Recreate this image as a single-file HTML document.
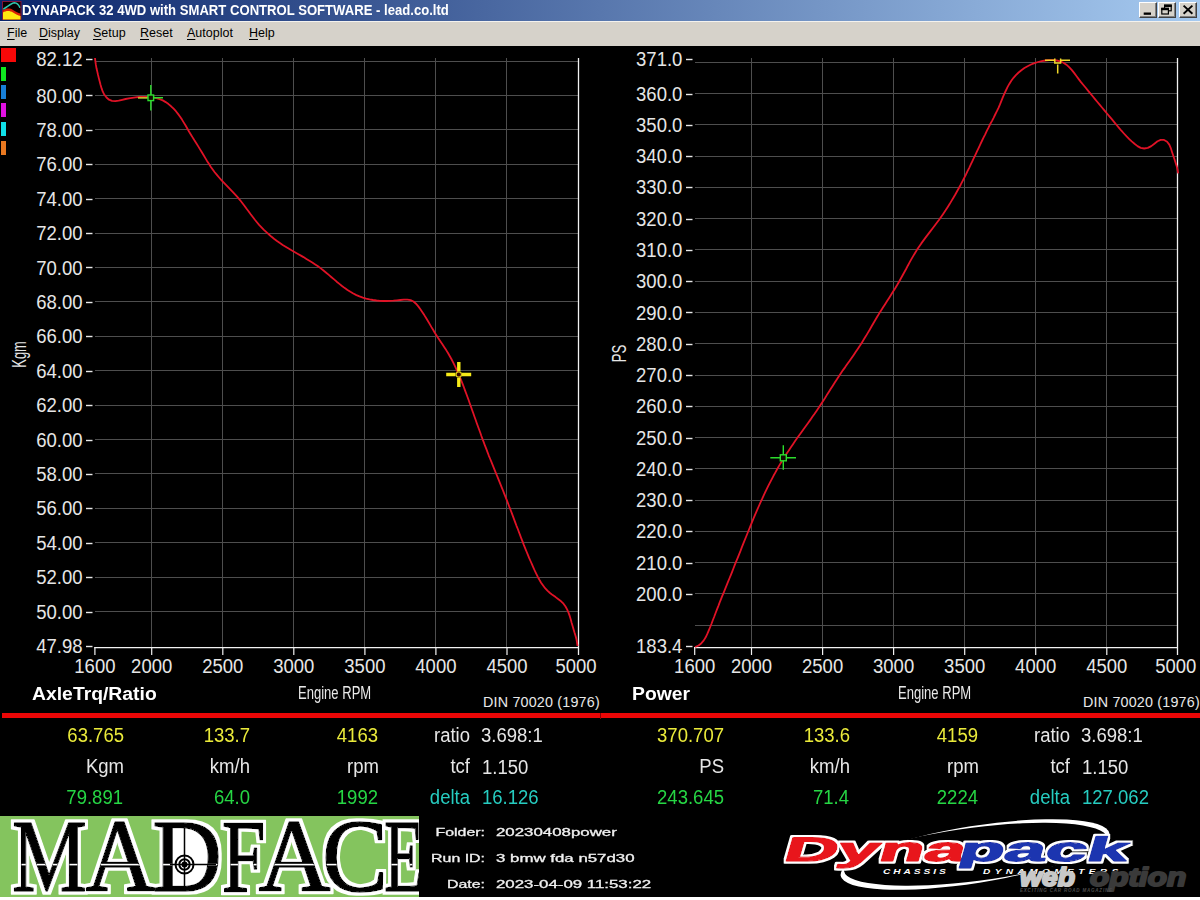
<!DOCTYPE html>
<html lang="en">
<head>
<meta charset="utf-8">
<title>DYNAPACK 32 4WD with SMART CONTROL SOFTWARE - lead.co.ltd</title>
<style>
html,body{margin:0;padding:0;}
body{width:1200px;height:900px;overflow:hidden;background:#000;position:relative;font-family:"Liberation Sans",sans-serif;color:#e8e8e8;}
.abs{position:absolute;white-space:nowrap;}
#titlebar{left:0;top:0;width:1200px;height:21px;background:linear-gradient(90deg,#0a246a 0%,#a6caf0 100%);}
#title{left:21.8px;top:2.4px;font-weight:bold;font-size:14px;line-height:16px;color:#fff;transform-origin:0 0;transform:scaleX(0.936);}
#menubar{left:0;top:21px;width:1200px;height:24.5px;background:#d6d2ca;border-top:1px solid #f4f2ee;box-sizing:border-box;}
.menu{top:26px;font-size:12.5px;line-height:14px;color:#000;}
.menu u{text-decoration:underline;text-decoration-thickness:1px;text-underline-offset:1.5px;}
.wbtn{top:2.3px;width:18px;height:16px;background:#d6d2ca;border:1px solid;border-color:#fff #404040 #404040 #fff;box-sizing:border-box;box-shadow:inset -1px -1px 0 #808080;}
svg text{font-family:"Liberation Sans",sans-serif;font-size:19.4px;fill:#e6e6e6;}
.cap{font-weight:bold;font-size:17.6px;line-height:20px;color:#fff;transform:scaleX(1.10);transform-origin:0 0;}
.erpm{font-size:17.5px;color:#e8e8e8;transform:scaleX(0.745);transform-origin:0 0;}
.din{font-size:14.3px;color:#e8e8e8;letter-spacing:0.2px;}
.d{font-size:19.4px;line-height:22px;transform:scaleX(0.955);transform-origin:0 0;}
.r{text-align:right;transform-origin:100% 0;}
.y{color:#eaea3a;}
.g{color:#26d644;}
.c{color:#26ccc0;}
.w{color:#e6e6e6;}
.info{font-size:10.6px;line-height:12px;color:#f0f0f0;transform:scaleX(1.5);-webkit-text-stroke:0.3px #f0f0f0;}
.il{transform-origin:100% 0;text-align:right;}
.iv{transform-origin:0 0;transform:scaleX(1.59);}
</style>
</head>
<body>

<!-- title bar -->
<div id="titlebar" class="abs"></div>
<svg class="abs" style="left:2px;top:1px" width="20" height="19" viewBox="0 0 20 19">
  <rect x="0" y="0" width="19.500" height="19" fill="#80143c"/>
  <rect x="1" y="1" width="17.500" height="17.500" fill="#080000"/>
  <path d="M1 18.500 L1 9.500 C4 7 8 7 11 9 C14 11 16 12 18.500 12.500 L18.500 18.500 Z" fill="#d82008"/>
  <path d="M1 18.500 L1 11.500 C4 9.500 8 9.500 11 11.500 C14 13.500 16 14.500 18.500 15 L18.500 18.500 Z" fill="#ffe810"/>
  <path d="M1.700 7.900 C6 5.500 9 2.200 12.500 1.800 C15 2 17 4.500 17.700 6.300" fill="none" stroke="#30c8b0" stroke-width="1.500" stroke-linecap="round"/>
</svg>
<div id="title" class="abs">DYNAPACK 32 4WD with SMART CONTROL SOFTWARE - lead.co.ltd</div>
<div class="abs wbtn" style="left:1139px"><svg width="16" height="14"><rect x="3.700" y="9.500" width="7.300" height="2.300" fill="#000"/></svg></div>
<div class="abs wbtn" style="left:1157.500px"><svg width="16" height="14"><rect x="5.600" y="2.200" width="6.600" height="5.600" fill="none" stroke="#000" stroke-width="1.200"/><rect x="5" y="1.600" width="7.800" height="2.400" fill="#000"/><rect x="2.800" y="5.400" width="6.600" height="5.600" fill="#d6d2ca" stroke="#000" stroke-width="1.200"/><rect x="2.200" y="4.800" width="7.800" height="2.400" fill="#000"/></svg></div>
<div class="abs wbtn" style="left:1179px"><svg width="16" height="14"><path d="M3.600 2.600 L12.400 10.800 M12.400 2.600 L3.600 10.800" stroke="#000" stroke-width="1.900"/></svg></div>

<!-- menu bar -->
<div id="menubar" class="abs"></div>
<div class="abs menu" style="left:7px"><u>F</u>ile</div>
<div class="abs menu" style="left:39px"><u>D</u>isplay</div>
<div class="abs menu" style="left:93px"><u>S</u>etup</div>
<div class="abs menu" style="left:140px"><u>R</u>eset</div>
<div class="abs menu" style="left:187px"><u>A</u>utoplot</div>
<div class="abs menu" style="left:249px"><u>H</u>elp</div>

<!-- run colour swatches -->
<div class="abs" style="left:1px;top:47.700px;width:15.300px;height:14.500px;background:#f80808"></div>
<div class="abs" style="left:1px;top:66.7px;width:5px;height:14px;background:#10e820"></div>
<div class="abs" style="left:1px;top:84.7px;width:5px;height:14px;background:#1880d8"></div>
<div class="abs" style="left:1px;top:102.7px;width:5px;height:14px;background:#e010e0"></div>
<div class="abs" style="left:1px;top:121.7px;width:5px;height:14px;background:#10e0e8"></div>
<div class="abs" style="left:1px;top:140.7px;width:5px;height:14px;background:#e87820"></div>

<!-- charts -->
<svg class="abs" style="left:0;top:0" width="1200" height="900" viewBox="0 0 1200 900">
<g shape-rendering="crispEdges">
<line x1="151.5" y1="58" x2="151.5" y2="647" stroke="#4e4e4e"/>
<line x1="222.5" y1="58" x2="222.5" y2="647" stroke="#4e4e4e"/>
<line x1="293.5" y1="58" x2="293.5" y2="647" stroke="#4e4e4e"/>
<line x1="364.5" y1="58" x2="364.5" y2="647" stroke="#4e4e4e"/>
<line x1="435.5" y1="58" x2="435.5" y2="647" stroke="#4e4e4e"/>
<line x1="506.5" y1="58" x2="506.5" y2="647" stroke="#4e4e4e"/>
<line x1="94.9" y1="611.5" x2="578.0" y2="611.5" stroke="#4e4e4e"/>
<line x1="94.9" y1="577.5" x2="578.0" y2="577.5" stroke="#4e4e4e"/>
<line x1="94.9" y1="542.5" x2="578.0" y2="542.5" stroke="#4e4e4e"/>
<line x1="94.9" y1="508.5" x2="578.0" y2="508.5" stroke="#4e4e4e"/>
<line x1="94.9" y1="473.5" x2="578.0" y2="473.5" stroke="#4e4e4e"/>
<line x1="94.9" y1="439.5" x2="578.0" y2="439.5" stroke="#4e4e4e"/>
<line x1="94.9" y1="405.5" x2="578.0" y2="405.5" stroke="#4e4e4e"/>
<line x1="94.9" y1="370.5" x2="578.0" y2="370.5" stroke="#4e4e4e"/>
<line x1="94.9" y1="336.5" x2="578.0" y2="336.5" stroke="#4e4e4e"/>
<line x1="94.9" y1="301.5" x2="578.0" y2="301.5" stroke="#4e4e4e"/>
<line x1="94.9" y1="267.5" x2="578.0" y2="267.5" stroke="#4e4e4e"/>
<line x1="94.9" y1="233.5" x2="578.0" y2="233.5" stroke="#4e4e4e"/>
<line x1="94.9" y1="198.5" x2="578.0" y2="198.5" stroke="#4e4e4e"/>
<line x1="94.9" y1="164.5" x2="578.0" y2="164.5" stroke="#4e4e4e"/>
<line x1="94.9" y1="129.5" x2="578.0" y2="129.5" stroke="#4e4e4e"/>
<line x1="94.9" y1="95.5" x2="578.0" y2="95.5" stroke="#4e4e4e"/>
<line x1="94.9" y1="61.5" x2="578.0" y2="61.5" stroke="#4e4e4e"/>
<line x1="578.5" y1="58" x2="578.5" y2="655" stroke="#f2f2f2" stroke-width="1.3" shape-rendering="auto"/>
<line x1="94.3" y1="647.5" x2="578.0" y2="647.5" stroke="#f2f2f2" stroke-width="1.25" shape-rendering="auto"/>
<line x1="94.9" y1="647" x2="94.9" y2="655" stroke="#f2f2f2" stroke-width="1.2" shape-rendering="auto"/>
<line x1="151.7" y1="647" x2="151.7" y2="655" stroke="#f2f2f2" stroke-width="1.2" shape-rendering="auto"/>
<line x1="222.8" y1="647" x2="222.8" y2="655" stroke="#f2f2f2" stroke-width="1.2" shape-rendering="auto"/>
<line x1="293.8" y1="647" x2="293.8" y2="655" stroke="#f2f2f2" stroke-width="1.2" shape-rendering="auto"/>
<line x1="364.9" y1="647" x2="364.9" y2="655" stroke="#f2f2f2" stroke-width="1.2" shape-rendering="auto"/>
<line x1="435.9" y1="647" x2="435.9" y2="655" stroke="#f2f2f2" stroke-width="1.2" shape-rendering="auto"/>
<line x1="507.0" y1="647" x2="507.0" y2="655" stroke="#f2f2f2" stroke-width="1.2" shape-rendering="auto"/>
<line x1="751.5" y1="58" x2="751.5" y2="647" stroke="#4e4e4e"/>
<line x1="822.5" y1="58" x2="822.5" y2="647" stroke="#4e4e4e"/>
<line x1="893.5" y1="58" x2="893.5" y2="647" stroke="#4e4e4e"/>
<line x1="964.5" y1="58" x2="964.5" y2="647" stroke="#4e4e4e"/>
<line x1="1035.5" y1="58" x2="1035.5" y2="647" stroke="#4e4e4e"/>
<line x1="1106.5" y1="58" x2="1106.5" y2="647" stroke="#4e4e4e"/>
<line x1="694.7" y1="625.5" x2="1177.8" y2="625.5" stroke="#4e4e4e"/>
<line x1="694.7" y1="593.5" x2="1177.8" y2="593.5" stroke="#4e4e4e"/>
<line x1="694.7" y1="562.5" x2="1177.8" y2="562.5" stroke="#4e4e4e"/>
<line x1="694.7" y1="531.5" x2="1177.8" y2="531.5" stroke="#4e4e4e"/>
<line x1="694.7" y1="500.5" x2="1177.8" y2="500.5" stroke="#4e4e4e"/>
<line x1="694.7" y1="468.5" x2="1177.8" y2="468.5" stroke="#4e4e4e"/>
<line x1="694.7" y1="437.5" x2="1177.8" y2="437.5" stroke="#4e4e4e"/>
<line x1="694.7" y1="406.5" x2="1177.8" y2="406.5" stroke="#4e4e4e"/>
<line x1="694.7" y1="375.5" x2="1177.8" y2="375.5" stroke="#4e4e4e"/>
<line x1="694.7" y1="343.5" x2="1177.8" y2="343.5" stroke="#4e4e4e"/>
<line x1="694.7" y1="312.5" x2="1177.8" y2="312.5" stroke="#4e4e4e"/>
<line x1="694.7" y1="281.5" x2="1177.8" y2="281.5" stroke="#4e4e4e"/>
<line x1="694.7" y1="249.5" x2="1177.8" y2="249.5" stroke="#4e4e4e"/>
<line x1="694.7" y1="218.5" x2="1177.8" y2="218.5" stroke="#4e4e4e"/>
<line x1="694.7" y1="187.5" x2="1177.8" y2="187.5" stroke="#4e4e4e"/>
<line x1="694.7" y1="156.5" x2="1177.8" y2="156.5" stroke="#4e4e4e"/>
<line x1="694.7" y1="124.5" x2="1177.8" y2="124.5" stroke="#4e4e4e"/>
<line x1="694.7" y1="93.5" x2="1177.8" y2="93.5" stroke="#4e4e4e"/>
<line x1="694.7" y1="62.5" x2="1177.8" y2="62.5" stroke="#4e4e4e"/>
<line x1="1177.5" y1="58" x2="1177.5" y2="655" stroke="#f2f2f2" stroke-width="1.3" shape-rendering="auto"/>
<line x1="694.1" y1="647.5" x2="1177.8" y2="647.5" stroke="#f2f2f2" stroke-width="1.25" shape-rendering="auto"/>
<line x1="694.7" y1="647" x2="694.7" y2="655" stroke="#f2f2f2" stroke-width="1.2" shape-rendering="auto"/>
<line x1="751.5" y1="647" x2="751.5" y2="655" stroke="#f2f2f2" stroke-width="1.2" shape-rendering="auto"/>
<line x1="822.6" y1="647" x2="822.6" y2="655" stroke="#f2f2f2" stroke-width="1.2" shape-rendering="auto"/>
<line x1="893.6" y1="647" x2="893.6" y2="655" stroke="#f2f2f2" stroke-width="1.2" shape-rendering="auto"/>
<line x1="964.7" y1="647" x2="964.7" y2="655" stroke="#f2f2f2" stroke-width="1.2" shape-rendering="auto"/>
<line x1="1035.7" y1="647" x2="1035.7" y2="655" stroke="#f2f2f2" stroke-width="1.2" shape-rendering="auto"/>
<line x1="1106.8" y1="647" x2="1106.8" y2="655" stroke="#f2f2f2" stroke-width="1.2" shape-rendering="auto"/>
</g>
<text transform="translate(82.6,66.0) scale(0.955,1)" text-anchor="end">82.12</text>
<line x1="86" y1="59.5" x2="92.5" y2="59.5" stroke="#e8e8e8" stroke-width="1.4"/>
<text transform="translate(82.6,102.5) scale(0.955,1)" text-anchor="end">80.00</text>
<line x1="86" y1="95.5" x2="92.5" y2="95.5" stroke="#e8e8e8" stroke-width="1.4"/>
<text transform="translate(82.6,136.9) scale(0.955,1)" text-anchor="end">78.00</text>
<line x1="86" y1="130.5" x2="92.5" y2="130.5" stroke="#e8e8e8" stroke-width="1.4"/>
<text transform="translate(82.6,171.3) scale(0.955,1)" text-anchor="end">76.00</text>
<line x1="86" y1="164.5" x2="92.5" y2="164.5" stroke="#e8e8e8" stroke-width="1.4"/>
<text transform="translate(82.6,205.7) scale(0.955,1)" text-anchor="end">74.00</text>
<line x1="86" y1="199.5" x2="92.5" y2="199.5" stroke="#e8e8e8" stroke-width="1.4"/>
<text transform="translate(82.6,240.1) scale(0.955,1)" text-anchor="end">72.00</text>
<line x1="86" y1="233.5" x2="92.5" y2="233.5" stroke="#e8e8e8" stroke-width="1.4"/>
<text transform="translate(82.6,274.5) scale(0.955,1)" text-anchor="end">70.00</text>
<line x1="86" y1="267.5" x2="92.5" y2="267.5" stroke="#e8e8e8" stroke-width="1.4"/>
<text transform="translate(82.6,308.9) scale(0.955,1)" text-anchor="end">68.00</text>
<line x1="86" y1="302.5" x2="92.5" y2="302.5" stroke="#e8e8e8" stroke-width="1.4"/>
<text transform="translate(82.6,343.3) scale(0.955,1)" text-anchor="end">66.00</text>
<line x1="86" y1="336.5" x2="92.5" y2="336.5" stroke="#e8e8e8" stroke-width="1.4"/>
<text transform="translate(82.6,377.7) scale(0.955,1)" text-anchor="end">64.00</text>
<line x1="86" y1="371.5" x2="92.5" y2="371.5" stroke="#e8e8e8" stroke-width="1.4"/>
<text transform="translate(82.6,412.1) scale(0.955,1)" text-anchor="end">62.00</text>
<line x1="86" y1="405.5" x2="92.5" y2="405.5" stroke="#e8e8e8" stroke-width="1.4"/>
<text transform="translate(82.6,446.5) scale(0.955,1)" text-anchor="end">60.00</text>
<line x1="86" y1="440.5" x2="92.5" y2="440.5" stroke="#e8e8e8" stroke-width="1.4"/>
<text transform="translate(82.6,480.9) scale(0.955,1)" text-anchor="end">58.00</text>
<line x1="86" y1="474.5" x2="92.5" y2="474.5" stroke="#e8e8e8" stroke-width="1.4"/>
<text transform="translate(82.6,515.3) scale(0.955,1)" text-anchor="end">56.00</text>
<line x1="86" y1="508.5" x2="92.5" y2="508.5" stroke="#e8e8e8" stroke-width="1.4"/>
<text transform="translate(82.6,549.7) scale(0.955,1)" text-anchor="end">54.00</text>
<line x1="86" y1="543.5" x2="92.5" y2="543.5" stroke="#e8e8e8" stroke-width="1.4"/>
<text transform="translate(82.6,584.1) scale(0.955,1)" text-anchor="end">52.00</text>
<line x1="86" y1="577.5" x2="92.5" y2="577.5" stroke="#e8e8e8" stroke-width="1.4"/>
<text transform="translate(82.6,618.5) scale(0.955,1)" text-anchor="end">50.00</text>
<line x1="86" y1="612.5" x2="92.5" y2="612.5" stroke="#e8e8e8" stroke-width="1.4"/>
<text transform="translate(82.6,653.3) scale(0.955,1)" text-anchor="end">47.98</text>
<line x1="86" y1="646.5" x2="92.5" y2="646.5" stroke="#e8e8e8" stroke-width="1.4"/>
<text transform="translate(682.4,66.1) scale(0.955,1)" text-anchor="end">371.0</text>
<line x1="686" y1="59.5" x2="692.5" y2="59.5" stroke="#e8e8e8" stroke-width="1.4"/>
<text transform="translate(682.4,100.5) scale(0.955,1)" text-anchor="end">360.0</text>
<line x1="686" y1="94.5" x2="692.5" y2="94.5" stroke="#e8e8e8" stroke-width="1.4"/>
<text transform="translate(682.4,131.8) scale(0.955,1)" text-anchor="end">350.0</text>
<line x1="686" y1="125.5" x2="692.5" y2="125.5" stroke="#e8e8e8" stroke-width="1.4"/>
<text transform="translate(682.4,163.1) scale(0.955,1)" text-anchor="end">340.0</text>
<line x1="686" y1="156.5" x2="692.5" y2="156.5" stroke="#e8e8e8" stroke-width="1.4"/>
<text transform="translate(682.4,194.4) scale(0.955,1)" text-anchor="end">330.0</text>
<line x1="686" y1="187.5" x2="692.5" y2="187.5" stroke="#e8e8e8" stroke-width="1.4"/>
<text transform="translate(682.4,225.6) scale(0.955,1)" text-anchor="end">320.0</text>
<line x1="686" y1="219.5" x2="692.5" y2="219.5" stroke="#e8e8e8" stroke-width="1.4"/>
<text transform="translate(682.4,256.9) scale(0.955,1)" text-anchor="end">310.0</text>
<line x1="686" y1="250.5" x2="692.5" y2="250.5" stroke="#e8e8e8" stroke-width="1.4"/>
<text transform="translate(682.4,288.2) scale(0.955,1)" text-anchor="end">300.0</text>
<line x1="686" y1="281.5" x2="692.5" y2="281.5" stroke="#e8e8e8" stroke-width="1.4"/>
<text transform="translate(682.4,319.5) scale(0.955,1)" text-anchor="end">290.0</text>
<line x1="686" y1="312.5" x2="692.5" y2="312.5" stroke="#e8e8e8" stroke-width="1.4"/>
<text transform="translate(682.4,350.7) scale(0.955,1)" text-anchor="end">280.0</text>
<line x1="686" y1="344.5" x2="692.5" y2="344.5" stroke="#e8e8e8" stroke-width="1.4"/>
<text transform="translate(682.4,382.0) scale(0.955,1)" text-anchor="end">270.0</text>
<line x1="686" y1="375.5" x2="692.5" y2="375.5" stroke="#e8e8e8" stroke-width="1.4"/>
<text transform="translate(682.4,413.3) scale(0.955,1)" text-anchor="end">260.0</text>
<line x1="686" y1="406.5" x2="692.5" y2="406.5" stroke="#e8e8e8" stroke-width="1.4"/>
<text transform="translate(682.4,444.6) scale(0.955,1)" text-anchor="end">250.0</text>
<line x1="686" y1="438.5" x2="692.5" y2="438.5" stroke="#e8e8e8" stroke-width="1.4"/>
<text transform="translate(682.4,475.8) scale(0.955,1)" text-anchor="end">240.0</text>
<line x1="686" y1="469.5" x2="692.5" y2="469.5" stroke="#e8e8e8" stroke-width="1.4"/>
<text transform="translate(682.4,507.1) scale(0.955,1)" text-anchor="end">230.0</text>
<line x1="686" y1="500.5" x2="692.5" y2="500.5" stroke="#e8e8e8" stroke-width="1.4"/>
<text transform="translate(682.4,538.4) scale(0.955,1)" text-anchor="end">220.0</text>
<line x1="686" y1="531.5" x2="692.5" y2="531.5" stroke="#e8e8e8" stroke-width="1.4"/>
<text transform="translate(682.4,569.7) scale(0.955,1)" text-anchor="end">210.0</text>
<line x1="686" y1="563.5" x2="692.5" y2="563.5" stroke="#e8e8e8" stroke-width="1.4"/>
<text transform="translate(682.4,601.0) scale(0.955,1)" text-anchor="end">200.0</text>
<line x1="686" y1="594.5" x2="692.5" y2="594.5" stroke="#e8e8e8" stroke-width="1.4"/>
<text transform="translate(682.4,652.9) scale(0.955,1)" text-anchor="end">183.4</text>
<line x1="686" y1="646.5" x2="692.5" y2="646.5" stroke="#e8e8e8" stroke-width="1.4"/>
<text transform="translate(94.9,672.8) scale(0.955,1)" text-anchor="middle">1600</text>
<text transform="translate(151.7,672.8) scale(0.955,1)" text-anchor="middle">2000</text>
<text transform="translate(222.8,672.8) scale(0.955,1)" text-anchor="middle">2500</text>
<text transform="translate(293.8,672.8) scale(0.955,1)" text-anchor="middle">3000</text>
<text transform="translate(364.9,672.8) scale(0.955,1)" text-anchor="middle">3500</text>
<text transform="translate(435.9,672.8) scale(0.955,1)" text-anchor="middle">4000</text>
<text transform="translate(507.0,672.8) scale(0.955,1)" text-anchor="middle">4500</text>
<text transform="translate(576.0,672.8) scale(0.955,1)" text-anchor="middle">5000</text>
<text transform="translate(694.7,672.8) scale(0.955,1)" text-anchor="middle">1600</text>
<text transform="translate(751.5,672.8) scale(0.955,1)" text-anchor="middle">2000</text>
<text transform="translate(822.6,672.8) scale(0.955,1)" text-anchor="middle">2500</text>
<text transform="translate(893.6,672.8) scale(0.955,1)" text-anchor="middle">3000</text>
<text transform="translate(964.7,672.8) scale(0.955,1)" text-anchor="middle">3500</text>
<text transform="translate(1035.7,672.8) scale(0.955,1)" text-anchor="middle">4000</text>
<text transform="translate(1106.8,672.8) scale(0.955,1)" text-anchor="middle">4500</text>
<text transform="translate(1175.8,672.8) scale(0.955,1)" text-anchor="middle">5000</text>
<text transform="translate(26.2,354.5) rotate(-90) scale(0.63,1)" text-anchor="middle" style="font-size:20.3px">Kgm</text>
<text transform="translate(626.2,353.5) rotate(-90) scale(0.65,1)" text-anchor="middle" style="font-size:20.3px">PS</text>
<path d="M95.0 58.0 L95.4 61.5 L95.9 64.9 L96.5 68.3 L97.3 71.6 L98.0 74.8 L98.8 78.1 L99.7 81.5 L100.6 85.0 L101.6 88.4 L102.8 91.7 L104.4 94.8 L106.5 97.5 L109.0 99.7 L112.0 100.9 L115.3 101.2 L118.7 100.7 L122.2 99.8 L125.6 99.0 L128.9 98.3 L132.2 97.8 L135.6 97.4 L139.0 97.0 L142.5 96.9 L146.0 96.8 L149.6 97.0 L153.0 97.4 L156.4 98.1 L159.7 99.1 L162.8 100.4 L165.7 102.1 L168.5 104.1 L171.1 106.3 L173.6 108.7 L175.9 111.2 L178.0 113.9 L180.1 116.7 L182.0 119.6 L183.8 122.6 L185.6 125.5 L187.3 128.5 L189.0 131.5 L190.8 134.5 L192.6 137.4 L194.4 140.3 L196.3 143.2 L198.1 146.1 L199.9 149.1 L201.7 152.0 L203.5 155.0 L205.2 157.9 L207.0 160.9 L208.9 163.8 L210.7 166.7 L212.7 169.5 L214.7 172.2 L216.9 174.9 L219.1 177.5 L221.4 180.1 L223.8 182.6 L226.2 185.1 L228.6 187.6 L231.0 190.1 L233.4 192.6 L235.7 195.1 L238.0 197.7 L240.2 200.3 L242.3 203.0 L244.4 205.7 L246.4 208.5 L248.5 211.2 L250.5 214.0 L252.6 216.8 L254.7 219.5 L256.9 222.2 L259.1 224.8 L261.5 227.3 L263.9 229.8 L266.4 232.2 L269.0 234.5 L271.6 236.8 L274.3 239.0 L277.0 241.0 L279.9 243.0 L282.7 244.9 L285.6 246.7 L288.6 248.5 L291.5 250.3 L294.5 252.0 L297.5 253.7 L300.5 255.4 L303.5 257.1 L306.4 258.9 L309.4 260.7 L312.3 262.5 L315.2 264.4 L318.0 266.3 L320.8 268.4 L323.5 270.5 L326.2 272.7 L328.8 274.9 L331.5 277.2 L334.1 279.4 L336.7 281.7 L339.4 283.9 L342.0 286.0 L344.8 288.1 L347.5 290.0 L350.4 291.8 L353.3 293.5 L356.4 295.1 L359.5 296.4 L362.8 297.6 L366.1 298.6 L369.5 299.4 L373.0 300.0 L376.5 300.5 L379.9 300.8 L383.3 301.0 L386.7 301.0 L390.1 300.8 L393.4 300.6 L396.9 300.3 L400.3 300.0 L403.9 299.7 L407.3 299.6 L410.6 300.1 L413.5 301.5 L416.0 303.7 L418.3 306.4 L420.4 309.3 L422.4 312.2 L424.3 315.1 L426.1 318.0 L427.9 321.0 L429.6 323.9 L431.3 326.9 L433.1 329.8 L434.8 332.8 L436.7 335.7 L438.5 338.6 L440.5 341.4 L442.4 344.3 L444.3 347.2 L446.2 350.1 L448.0 353.0 L449.7 356.0 L451.4 359.0 L453.0 362.1 L454.5 365.1 L456.0 368.3 L457.4 371.4 L458.8 374.5 L460.1 377.7 L461.4 380.9 L462.7 384.1 L463.9 387.3 L465.1 390.6 L466.3 393.8 L467.5 397.0 L468.7 400.3 L469.8 403.5 L471.0 406.8 L472.1 410.0 L473.3 413.3 L474.4 416.5 L475.6 419.8 L476.7 423.0 L477.9 426.3 L479.1 429.5 L480.3 432.7 L481.4 436.0 L482.6 439.2 L483.8 442.4 L485.0 445.7 L486.3 448.9 L487.5 452.1 L488.7 455.3 L490.0 458.5 L491.3 461.7 L492.6 464.9 L493.9 468.1 L495.2 471.3 L496.5 474.5 L497.8 477.7 L499.1 480.9 L500.4 484.1 L501.7 487.3 L503.0 490.5 L504.2 493.6 L505.5 496.9 L506.8 500.1 L508.0 503.3 L509.2 506.5 L510.5 509.7 L511.7 512.9 L512.9 516.1 L514.1 519.4 L515.3 522.6 L516.5 525.8 L517.8 529.0 L519.0 532.2 L520.2 535.4 L521.4 538.7 L522.7 541.9 L523.9 545.1 L525.2 548.3 L526.5 551.5 L527.8 554.7 L529.1 557.9 L530.5 561.0 L531.9 564.2 L533.3 567.4 L534.7 570.5 L536.2 573.7 L537.7 576.7 L539.4 579.8 L541.1 582.7 L543.1 585.5 L545.1 588.2 L547.4 590.7 L550.0 593.0 L552.7 595.1 L555.6 597.1 L558.4 599.2 L561.1 601.3 L563.5 603.7 L565.5 606.5 L567.1 609.4 L568.5 612.6 L569.7 615.9 L570.7 619.3 L571.6 622.7 L572.6 626.1 L573.6 629.4 L574.5 632.6 L575.5 635.8 L576.4 639.0 L577.0 642.4 L577.5 646.0" fill="none" stroke="#e01226" stroke-width="1.8" stroke-linejoin="round"/>
<path d="M695.0 647.0 L698.6 645.5 L701.4 643.2 L703.8 640.4 L705.7 637.3 L707.3 633.9 L708.8 630.4 L710.2 627.0 L711.6 623.5 L712.9 620.0 L714.3 616.5 L715.6 613.0 L716.9 609.6 L718.3 606.1 L719.6 602.6 L721.0 599.2 L722.4 595.7 L723.8 592.3 L725.2 588.8 L726.6 585.4 L728.0 581.9 L729.4 578.5 L730.8 575.1 L732.2 571.6 L733.5 568.2 L734.9 564.7 L736.3 561.2 L737.7 557.8 L739.1 554.3 L740.5 550.9 L741.8 547.4 L743.2 543.9 L744.6 540.4 L746.0 537.0 L747.4 533.5 L748.8 530.0 L750.2 526.6 L751.6 523.1 L753.0 519.7 L754.5 516.2 L755.9 512.8 L757.4 509.4 L758.9 506.0 L760.4 502.6 L762.0 499.2 L763.5 495.8 L765.1 492.4 L766.7 489.1 L768.4 485.7 L770.1 482.4 L771.8 479.1 L773.5 475.8 L775.3 472.6 L777.1 469.3 L778.9 466.1 L780.8 462.9 L782.8 459.7 L784.7 456.6 L786.7 453.5 L788.8 450.4 L790.9 447.3 L793.0 444.2 L795.1 441.1 L797.2 438.1 L799.4 435.0 L801.6 432.0 L803.7 429.0 L805.9 426.0 L808.1 422.9 L810.3 419.9 L812.4 416.8 L814.6 413.8 L816.7 410.7 L818.8 407.6 L820.8 404.5 L822.8 401.4 L824.9 398.3 L826.8 395.1 L828.8 392.0 L830.8 388.8 L832.8 385.7 L834.8 382.5 L836.8 379.4 L838.9 376.3 L840.9 373.2 L843.0 370.1 L845.2 367.1 L847.3 364.0 L849.5 361.0 L851.6 357.9 L853.7 354.9 L855.8 351.8 L857.9 348.7 L860.0 345.6 L862.0 342.4 L863.9 339.3 L865.9 336.1 L867.8 332.9 L869.7 329.7 L871.5 326.5 L873.4 323.2 L875.3 320.0 L877.2 316.8 L879.1 313.6 L881.1 310.5 L883.1 307.3 L885.1 304.2 L887.1 301.0 L889.1 297.9 L891.1 294.7 L893.1 291.6 L895.1 288.4 L897.0 285.3 L898.9 282.0 L900.7 278.8 L902.5 275.5 L904.3 272.3 L906.1 269.0 L907.8 265.7 L909.6 262.4 L911.4 259.1 L913.3 255.9 L915.2 252.7 L917.1 249.6 L919.2 246.5 L921.3 243.4 L923.5 240.4 L925.7 237.4 L928.0 234.4 L930.3 231.4 L932.5 228.5 L934.8 225.5 L937.0 222.5 L939.3 219.5 L941.4 216.5 L943.5 213.4 L945.6 210.3 L947.6 207.2 L949.6 204.1 L951.5 200.9 L953.4 197.7 L955.3 194.5 L957.1 191.2 L958.9 188.0 L960.7 184.7 L962.4 181.4 L964.1 178.1 L965.8 174.8 L967.4 171.4 L969.1 168.1 L970.7 164.7 L972.3 161.3 L973.9 157.9 L975.5 154.6 L977.1 151.2 L978.7 147.8 L980.3 144.4 L981.9 141.0 L983.5 137.6 L985.2 134.3 L986.8 130.9 L988.5 127.6 L990.1 124.3 L991.9 121.1 L993.6 117.8 L995.2 114.5 L996.9 111.2 L998.5 107.9 L1000.0 104.4 L1001.4 100.9 L1002.8 97.4 L1004.3 93.9 L1005.9 90.5 L1007.5 87.1 L1009.3 83.9 L1011.3 80.7 L1013.5 77.8 L1015.9 75.1 L1018.6 72.5 L1021.4 70.2 L1024.4 68.0 L1027.6 66.2 L1031.0 64.5 L1034.5 63.1 L1038.1 62.0 L1041.7 61.1 L1045.5 60.5 L1049.2 60.2 L1053.0 60.1 L1056.7 60.5 L1060.2 61.3 L1063.4 62.7 L1066.4 64.7 L1069.1 67.1 L1071.7 69.9 L1074.1 72.9 L1076.4 76.0 L1078.7 79.1 L1081.0 82.1 L1083.4 85.0 L1085.7 87.8 L1088.0 90.6 L1090.3 93.4 L1092.7 96.3 L1095.0 99.1 L1097.4 102.0 L1099.8 104.8 L1102.2 107.7 L1104.6 110.6 L1107.0 113.5 L1109.4 116.4 L1111.8 119.2 L1114.2 122.1 L1116.6 125.0 L1119.0 127.8 L1121.4 130.7 L1123.9 133.5 L1126.4 136.2 L1129.0 138.8 L1131.7 141.4 L1134.5 143.8 L1137.5 146.1 L1140.7 147.9 L1144.2 148.5 L1147.8 147.9 L1151.3 146.1 L1154.4 143.7 L1157.5 141.3 L1160.7 139.9 L1164.1 139.9 L1167.1 141.7 L1169.3 144.6 L1170.8 148.1 L1172.0 151.9 L1173.2 155.5 L1174.4 159.0 L1175.5 162.5 L1176.6 165.9 L1177.5 169.5 L1178.2 173.4" fill="none" stroke="#e01226" stroke-width="1.8" stroke-linejoin="round"/>
<!-- green cursor (left) -->
<g stroke="#2cdc2c" stroke-width="1.400" fill="none">
  <path d="M138 97.800 H163 M150.800 85 V110.500"/>
  <rect x="148" y="95" width="5.600" height="5.600" fill="#100c00"/>
</g>
<path d="M138 97.800 H147.200" stroke="#e0a828" stroke-width="1.400"/>
<!-- yellow cursor (left) -->
<g stroke="#f6ea18" stroke-width="3.400" fill="none">
  <path d="M446.200 374.500 H455.600 M462 374.500 H471.200 M458.800 362 V371.200 M458.800 377.800 V387"/>
</g>
<circle cx="458.800" cy="374.500" r="2.700" fill="#300000" stroke="#d8c818" stroke-width="1.200"/>
<!-- green cursor (right) -->
<g stroke="#2cdc2c" stroke-width="1.400" fill="none">
  <path d="M770.300 457.800 H796 M783.300 445.300 V469.800"/>
  <rect x="780.300" y="454.800" width="6" height="6" fill="#100c00"/>
</g>
<!-- yellow cursor (right, clipped at top) -->
<g stroke="#f0d828" stroke-width="1.500" fill="none">
  <path d="M1045 60.300 H1054.500 M1061 60.300 H1070 M1057.700 64.500 V73.500 M1054.800 58.500 V63 H1060.600 V58.500"/>
</g>
</svg>

<!-- captions under charts -->
<div class="abs cap" style="left:31.5px;top:684px">AxleTrq/Ratio</div>
<div class="abs cap" style="left:632px;top:684px">Power</div>
<div class="abs erpm" style="left:298px;top:683px">Engine RPM</div>
<div class="abs erpm" style="left:898px;top:683px">Engine RPM</div>
<div class="abs din" style="left:483px;top:694px">DIN 70020 (1976)</div>
<div class="abs din" style="left:1083px;top:694px">DIN 70020 (1976)</div>

<!-- red divider -->
<div class="abs" style="left:2px;top:713.300px;width:1198px;height:5px;background:#ea0606"></div>
<div class="abs" style="left:600px;top:713px;width:1px;height:6px;background:#8c0000"></div>

<!-- left data panel -->
<div class="abs d r y" style="left:24px;top:724.3px;width:100px">63.765</div>
<div class="abs d r w" style="left:24px;top:754.8px;width:100px">Kgm</div>
<div class="abs d r g" style="left:24px;top:786.3px;width:99px">79.891</div>
<div class="abs d r y" style="left:150px;top:724.3px;width:100px">133.7</div>
<div class="abs d r w" style="left:150px;top:754.8px;width:100px">km/h</div>
<div class="abs d r g" style="left:150px;top:786.3px;width:100px">64.0</div>
<div class="abs d r y" style="left:278px;top:724.3px;width:100px">4163</div>
<div class="abs d r w" style="left:279px;top:754.8px;width:100px">rpm</div>
<div class="abs d r g" style="left:278px;top:786.3px;width:100px">1992</div>
<div class="abs d r w" style="left:370px;top:724.3px;width:100px">ratio</div>
<div class="abs d r w" style="left:370px;top:754.8px;width:100px">tcf</div>
<div class="abs d r c" style="left:370px;top:786.3px;width:100px">delta</div>
<div class="abs d w" style="left:481px;top:724.3px">3.698:1</div>
<div class="abs d w" style="left:482px;top:756px">1.150</div>
<div class="abs d c" style="left:482px;top:786.3px">16.126</div>

<!-- right data panel -->
<div class="abs d r y" style="left:624px;top:724.3px;width:100px">370.707</div>
<div class="abs d r w" style="left:624px;top:754.8px;width:100px">PS</div>
<div class="abs d r g" style="left:624px;top:786.3px;width:100px">243.645</div>
<div class="abs d r y" style="left:750px;top:724.3px;width:100px">133.6</div>
<div class="abs d r w" style="left:750px;top:754.8px;width:100px">km/h</div>
<div class="abs d r g" style="left:750px;top:786.3px;width:99px">71.4</div>
<div class="abs d r y" style="left:878px;top:724.3px;width:100px">4159</div>
<div class="abs d r w" style="left:879px;top:754.8px;width:100px">rpm</div>
<div class="abs d r g" style="left:878px;top:786.3px;width:100px">2224</div>
<div class="abs d r w" style="left:970px;top:724.3px;width:100px">ratio</div>
<div class="abs d r w" style="left:970px;top:754.8px;width:100px">tcf</div>
<div class="abs d r c" style="left:970px;top:786.3px;width:100px">delta</div>
<div class="abs d w" style="left:1081px;top:724.3px">3.698:1</div>
<div class="abs d w" style="left:1082px;top:756px">1.150</div>
<div class="abs d c" style="left:1082px;top:786.3px">127.062</div>

<!-- footer: MADFACE logo -->
<svg class="abs" style="left:0;top:816px" width="419" height="81" viewBox="0 0 419 81" role="img" aria-label="MADFACE">
  <title>MADFACE</title>
  <defs>
    <clipPath id="madclip"><text y="74.500" style="font-family:'Liberation Serif',serif;font-size:103.5px"><tspan x="12.1" textLength="74.9" lengthAdjust="spacingAndGlyphs">M</tspan><tspan x="85.5" textLength="69.6" lengthAdjust="spacingAndGlyphs">A</tspan><tspan x="152.2" textLength="69.7" lengthAdjust="spacingAndGlyphs">D</tspan><tspan x="221.7" textLength="43.6" lengthAdjust="spacingAndGlyphs">F</tspan><tspan x="258.5" textLength="72.2" lengthAdjust="spacingAndGlyphs">A</tspan><tspan x="321.9" textLength="66.0" lengthAdjust="spacingAndGlyphs">C</tspan><tspan x="384.1" textLength="40.2" lengthAdjust="spacingAndGlyphs">E</tspan></text></clipPath>
    <filter id="madol" x="-2%" y="-10%" width="104%" height="120%">
      <feMorphology in="SourceAlpha" operator="dilate" radius="2.700" result="d"/>
      <feFlood flood-color="#fff"/>
      <feComposite in2="d" operator="in" result="o"/>
      <feMerge><feMergeNode in="o"/><feMergeNode in="SourceGraphic"/></feMerge>
    </filter>
  </defs>
  <rect x="0" y="0" width="419" height="81" fill="#84c45e"/>
  <ellipse cx="187" cy="42" rx="25" ry="29" fill="#fff"/><rect x="168" y="15" width="22" height="60" fill="#fff"/>
  <g filter="url(#madol)"><text y="74.500" style="font-family:'Liberation Serif',serif;font-size:103.5px;fill:#000;stroke:#000;stroke-width:1.400px;stroke-linejoin:round"><tspan x="12.1" textLength="74.9" lengthAdjust="spacingAndGlyphs">M</tspan><tspan x="85.5" textLength="69.6" lengthAdjust="spacingAndGlyphs">A</tspan><tspan x="152.2" textLength="69.7" lengthAdjust="spacingAndGlyphs">D</tspan><tspan x="221.7" textLength="43.6" lengthAdjust="spacingAndGlyphs">F</tspan><tspan x="258.5" textLength="72.2" lengthAdjust="spacingAndGlyphs">A</tspan><tspan x="321.9" textLength="66.0" lengthAdjust="spacingAndGlyphs">C</tspan><tspan x="384.1" textLength="40.2" lengthAdjust="spacingAndGlyphs">E</tspan></text></g>
  <rect x="0" y="47.800" width="419" height="1.600" fill="#fff" clip-path="url(#madclip)"/>
  <g fill="none" stroke="#000" stroke-width="2">
    <circle cx="184.500" cy="48.500" r="9" fill="#fff"/>
    <circle cx="184.500" cy="48.500" r="5.200"/>
    <circle cx="184.500" cy="48.500" r="2" fill="#000"/>
    <path d="M184.500 12 V73 M170 48.500 H216" stroke-width="1.500"/>
  </g>
</svg>

<!-- footer: run info -->
<div class="abs info il" style="left:385px;top:826.4px;width:100px">Folder:</div>
<div class="abs info il" style="left:385px;top:852.4px;width:100px">Run ID:</div>
<div class="abs info il" style="left:385px;top:878.4px;width:100px">Date:</div>
<div class="abs info iv" style="left:496px;top:826.4px">20230408power</div>
<div class="abs info iv" style="left:496px;top:852.4px">3 bmw fda n57d30</div>
<div class="abs info iv" style="left:496px;top:878.4px">2023-04-09 11:53:22</div>

<!-- footer: Dynapack logo -->
<svg class="abs" style="left:770px;top:815px" width="430" height="82" viewBox="0 0 430 82">
  <defs>
    <filter id="wol" x="-5%" y="-20%" width="110%" height="140%">
      <feMorphology in="SourceAlpha" operator="dilate" radius="1.7" result="d"/>
      <feFlood flood-color="#fff"/>
      <feComposite in2="d" operator="in" result="o"/>
      <feMerge><feMergeNode in="o"/><feMergeNode in="SourceGraphic"/></feMerge>
    </filter>
  </defs>
  <ellipse cx="205" cy="39.500" rx="136" ry="28.500" fill="#fff" transform="rotate(-9 205 39.500)"/>
  <ellipse cx="205.500" cy="39.300" rx="132.500" ry="26.800" fill="#000" transform="rotate(-7.300 205 39.500)"/>
  <rect x="252" y="52" width="130" height="30" fill="#000"/>
  <g filter="url(#wol)">
    <text transform="translate(12,46) skewX(-16) scale(2.180,1)" style="font-size:34px;font-weight:bold;stroke-width:1.300px;stroke-linejoin:round"><tspan style="fill:#e8161e;stroke:#e8161e">Dyna</tspan><tspan dx="-3" style="fill:#1e36b0;stroke:#1e36b0">pack</tspan></text>
  </g>
  <text transform="translate(113,58.600) scale(1.350,1)" style="font-size:7.500px;font-weight:bold;font-style:italic;fill:#fff;letter-spacing:2.200px">CHASSIS</text>
  <text transform="translate(213,58.600) scale(1.350,1)" style="font-size:7.500px;font-weight:bold;font-style:italic;fill:#fff;letter-spacing:3.250px">DYNAMOMETERS</text>
  <text transform="translate(250,70.500) scale(1.130,1)" style="font-size:25px;font-weight:bold;font-style:italic;fill:#c8c8c8;stroke:#c8c8c8;stroke-width:2px;stroke-linejoin:round">web</text>
  <text transform="translate(320,70.500) scale(1.260,1)" style="font-size:25px;font-weight:bold;font-style:italic;fill:#3a3a3a;stroke:#3a3a3a;stroke-width:2px;stroke-linejoin:round">option</text>
  <text x="250" y="76.500" style="font-size:4.500px;font-weight:bold;font-style:italic;fill:#4c4c4c;letter-spacing:0.800px">EXCITING CAR ROAD MAGAZINE</text>
</svg>

<!-- bottom white strip -->
<div class="abs" style="left:0;top:897px;width:1200px;height:3px;background:#fff"></div>

</body>
</html>
